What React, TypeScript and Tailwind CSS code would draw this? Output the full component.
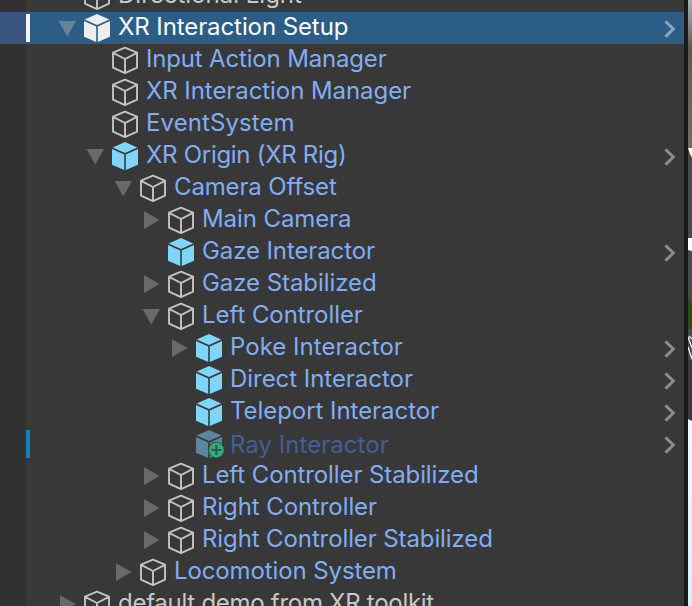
import React from "react";

type Kind = "wire" | "prefab" | "selected" | "added";
type Arrow = "open" | "closed" | null;

interface Item {
  label: string;
  depth: number;
  kind: Kind;
  arrow?: Arrow;
  chevron?: boolean;
  plain?: boolean;
  tracking?: string;
}

const items: Item[] = [
  { label: "Directional Light", depth: 0, kind: "wire", plain: true },
  { label: "XR Interaction Setup", depth: 0, kind: "selected", arrow: "open", chevron: true, tracking: "tracking-[-0.09px]" },
  { label: "Input Action Manager", depth: 1, kind: "wire", tracking: "tracking-[-0.17px]" },
  { label: "XR Interaction Manager", depth: 1, kind: "wire", tracking: "tracking-[-0.07px]" },
  { label: "EventSystem", depth: 1, kind: "wire", tracking: "tracking-[0.09px]" },
  { label: "XR Origin (XR Rig)", depth: 1, kind: "prefab", arrow: "open", chevron: true, tracking: "tracking-[-0.29px]" },
  { label: "Camera Offset", depth: 2, kind: "wire", arrow: "open", tracking: "tracking-[-0.14px]" },
  { label: "Main Camera", depth: 3, kind: "wire", arrow: "closed", tracking: "tracking-[-0.09px]" },
  { label: "Gaze Interactor", depth: 3, kind: "prefab", chevron: true, tracking: "tracking-[-0.11px]" },
  { label: "Gaze Stabilized", depth: 3, kind: "wire", arrow: "closed", tracking: "tracking-[-0.07px]" },
  { label: "Left Controller", depth: 3, kind: "wire", arrow: "open", tracking: "tracking-[-0.07px]" },
  { label: "Poke Interactor", depth: 4, kind: "prefab", arrow: "closed", chevron: true, tracking: "tracking-[0.03px]" },
  { label: "Direct Interactor", depth: 4, kind: "prefab", chevron: true, tracking: "tracking-[-0.04px]" },
  { label: "Teleport Interactor", depth: 4, kind: "prefab", chevron: true, tracking: "tracking-[-0.05px]" },
  { label: "Ray Interactor", depth: 4, kind: "added", chevron: true, tracking: "tracking-[0.04px]" },
  { label: "Left Controller Stabilized", depth: 3, kind: "wire", arrow: "closed", tracking: "tracking-[-0.1px]" },
  { label: "Right Controller", depth: 3, kind: "wire", arrow: "closed", tracking: "tracking-[-0.09px]" },
  { label: "Right Controller Stabilized", depth: 3, kind: "wire", arrow: "closed", tracking: "tracking-[-0.11px]" },
  { label: "Locomotion System", depth: 2, kind: "wire", arrow: "closed", tracking: "tracking-[-0.11px]" },
  { label: "default demo from XR toolkit", depth: 0, kind: "wire", arrow: "closed", plain: true, tracking: "tracking-[-0.28px]" },
];

const indents = ["w-7", "w-14", "w-[84px]", "w-28", "w-[140px]"];

function Cube({ kind }: { kind: Kind }) {
  if (kind === "wire") {
    return (
      <svg className="h-8 w-[30px] shrink-0" viewBox="0 0 30 32" fill="none" stroke="#c4c4c4" strokeWidth="1.9" strokeLinejoin="round">
        <path d="M13 3.7 25 8.6V23.7L13 29.1 1 23.7V8.6ZM1 8.8 13 15 25 8.8M13 15V29" />
      </svg>
    );
  }
  const fill = kind === "selected" ? "#eeeeee" : kind === "added" ? "#5b869b" : "#7fd6fd";
  return (
    <svg className="h-8 w-[30px] shrink-0" viewBox="0 0 30 32">
      <path fill={fill} d="M13 2 25.3 7.4 13 13 .7 7.4ZM0 9 12.2 14.4V30L0 24.8ZM26 9 13.8 14.4V30L26 24.8Z" />
      {kind === "added" && (
        <g>
          <circle cx="20.4" cy="22" r="8.2" fill="#34423e" />
          <circle cx="20.4" cy="22" r="7.4" fill="#30ad78" />
          <path d="M20.4 17V27M15.4 22H25.4" stroke="#32584d" strokeWidth="2.2" />
        </g>
      )}
    </svg>
  );
}

function Foldout({ arrow, selected }: { arrow?: Arrow; selected: boolean }) {
  return (
    <svg className="h-8 w-[26px] shrink-0" viewBox="0 0 26 32" fill={selected ? "#67839a" : "#696969"}>
      {arrow === "open" && <path d="M.5 9H18L9.3 24.5Z" />}
      {arrow === "closed" && <path d="M2 7.2V25L17.7 16Z" />}
    </svg>
  );
}

function Row({ item }: { item: Item }) {
  const selected = item.kind === "selected";
  const added = item.kind === "added";
  const color = selected
    ? "text-white"
    : added
      ? "text-[#425f96]"
      : item.plain
        ? "text-[#c8c8c8]"
        : "text-[#7faef8]";
  return (
    <div className="flex h-8 shrink-0 items-center">
      <div className={`h-8 w-[26px] shrink-0 ${selected ? "bg-[#385480]" : "bg-[#313131]"}`} />
      <div className={`flex h-8 w-[658px] items-center ${selected ? "bg-[#2c5d87]" : "bg-[#383838]"}`}>
        <div className={`h-7 w-1 shrink-0 ${selected ? "bg-[#f2f4ff]" : added ? "bg-[#0f81be]" : ""}`} />
        <div className={`shrink-0 ${indents[item.depth]}`} />
        <Foldout arrow={item.arrow} selected={selected} />
        <Cube kind={item.kind} />
        <span
          className={`ml-1 whitespace-pre text-2xl leading-8 ${added ? "pt-0.5" : "-mt-0.5"} ${color} ${item.tracking ?? ""}`}
        >
          {item.label}
        </span>
        {item.chevron && (
          <svg className="ml-auto mr-2 h-8 w-3 shrink-0" viewBox="0 0 12 32" fill="none" stroke={selected ? "#8aa6bd" : "#8c8c8c"} strokeWidth="3">
            <path d="M1.5 9.4 9.3 17 1.5 24.6" />
          </svg>
        )}
      </div>
    </div>
  );
}

function SceneSliver() {
  return (
    <svg className="h-[606px] w-1 shrink-0" viewBox="0 0 4 606">
      <defs>
        <linearGradient id="wall" x1="0" y1="0" x2="0" y2="1">
          <stop offset="0" stopColor="#a5b1b2" />
          <stop offset=".16" stopColor="#868b89" />
          <stop offset=".32" stopColor="#5d5856" />
          <stop offset="1" stopColor="#756b65" />
        </linearGradient>
        <linearGradient id="sky" x1="0" y1="0" x2="0" y2="1">
          <stop offset="0" stopColor="#eff8ff" />
          <stop offset="1" stopColor="#d9effc" />
        </linearGradient>
      </defs>
      <rect width="4" height="148" fill="url(#wall)" />
      <path d="M0 101.5H3L4 100" stroke="#4274c8" fill="none" />
      <rect y="148" width="4" height="272" fill="#45494c" />
      <path d="M0 148H4V158L2 154Z" fill="#fff" />
      <path d="M0 238H4V251L0 250Z" fill="#fff" />
      <path d="M0 299 4 304V329H0Z" fill="#294d18" />
      <path d="M0 337 4 348M1 336 4 339M0 347 4 359" stroke="#fff" strokeWidth="1.2" />
      <rect y="360" width="4" height="60" fill="#3b3b3d" />
      <path d="M0 419 4 421V606H0Z" fill="url(#sky)" />
    </svg>
  );
}

export default function App() {
  return (
    <div className="flex h-[606px] w-[692px] overflow-hidden bg-[#383838] font-['Inter',sans-serif]">
      <div className="-mt-5 flex w-[684px] shrink-0 flex-col">
        {items.map((item) => (
          <Row key={item.label} item={item} />
        ))}
      </div>
      <div className="w-1 shrink-0 bg-[#191919]" />
      <SceneSliver />
    </div>
  );
}
